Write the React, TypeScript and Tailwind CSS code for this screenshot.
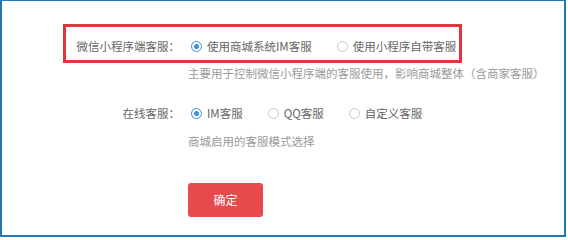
import React from "react";

function Radio({ checked, label, last }: { checked?: boolean; label: string; last?: boolean }) {
  return (
    <div className={`flex items-center ${last ? "" : "mr-[22px]"}`}>
      <span
        className={`ml-[3px] flex h-[11px] w-[11px] items-center justify-center rounded-full border ${
          checked ? "border-[#3d8fe0]" : "border-[#c9c9c9]"
        }`}
      >
        {checked && <span className="block h-[5px] w-[5px] rounded-full bg-[#3d8fe0]" />}
      </span>
      <span className="ml-[5px] text-[#666]">{label}</span>
    </div>
  );
}

export default function App() {
  return (
    <div
      className="relative h-[237px] w-[566px] border-t border-l-2 border-r-2 border-b-2 border-[#2079b4] bg-white text-[11.5px] leading-[16px]"
      style={{ fontFamily: '"Noto Sans CJK SC", "Noto Sans", sans-serif' }}
    >
      <div className="flex flex-col pt-[33px]">
        <div className="flex h-[24px] items-center">
          <div className="w-[178px] text-right text-[#666]">微信小程序端客服：</div>
          <div className="ml-[8px] flex items-center">
            <Radio checked label="使用商城系统IM客服" />
            <Radio label="使用小程序自带客服" last />
          </div>
        </div>
        <div className="ml-[186px] mt-[7px] h-[16px] text-[#9a9a9a]">
          主要用于控制微信小程序端的客服使用，影响商城整体（含商家客服）
        </div>

        <div className="mt-[20px] flex h-[24px] items-center">
          <div className="w-[178px] text-right text-[#666]">在线客服：</div>
          <div className="ml-[8px] flex items-center">
            <Radio checked label="IM客服" />
            <Radio label="QQ客服" />
            <Radio label="自定义客服" last />
          </div>
        </div>
        <div className="ml-[186px] mt-[8px] h-[16px] text-[#9a9a9a]">商城启用的客服模式选择</div>

        <div className="ml-[186px] mt-[34px]">
          <button className="flex h-[34px] w-[75px] items-center justify-center rounded-[3px] bg-[#e8494d] text-[12px] text-white">
            确定
          </button>
        </div>
      </div>

      <div className="pointer-events-none absolute left-[61px] top-[23px] h-[39px] w-[399px] border-[3px] border-[#e0363c]" />
    </div>
  );
}
